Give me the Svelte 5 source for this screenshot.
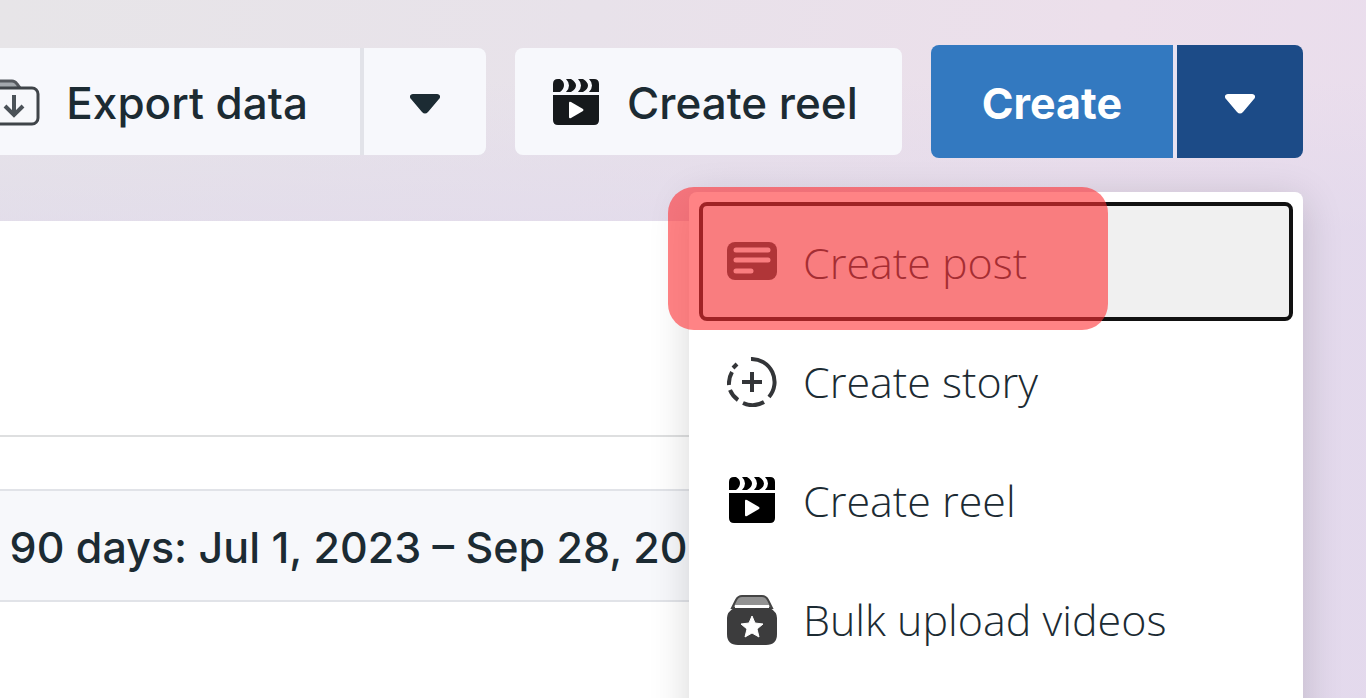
<script>
  const menuItems = [
    { icon: "post", label: "Create post" },
    { icon: "story", label: "Create story" },
    { icon: "reel", label: "Create reel" },
    { icon: "bulk", label: "Bulk upload videos" },
  ];

  let menuOpen = $state(true);
  let active = $state("post");
</script>

{#snippet caret()}
  <svg class="caret" viewBox="0 0 30 20" aria-hidden="true">
    <path
      d="M3 0h24c3 0 4 3 2 5L18 18q-3 3-6 0L1 5C-1 3 0 0 3 0z"
      fill="currentColor"
    />
  </svg>
{/snippet}

{#snippet reel()}
  <svg class="icon" viewBox="0 0 50 50" aria-hidden="true">
    <path
      d="M2 17h46v25q0 5-5 5H7q-5 0-5-5zM7 1h2q4 2 4 6t-4 7H2V6q0-5 5-5zM15 1h5q5 3 5 6.500t-5 6.500h-5q3-3 3-6.500t-3-6.500zM27 1h5q5 3 5 6.500t-5 6.500h-5q3-3 3-6.500t-3-6.500zM38 1h5q5 0 5 5v8H38q3-3 3-6.500t-3-6.500z"
      fill="currentColor"
    />
    <path d="M18 25q0-2 2-1l12 7q1 1 0 2l-12 7q-2 1-2-1z" fill="#fff" />
  </svg>
{/snippet}

<div class="page">
  <header class="toolbar">
    <div class="split">
      <button class="btn light export">
        <svg class="icon" viewBox="0 0 50 50" aria-hidden="true">
          <path
            d="M2 12V8q0-5 5-5h15q3 0 5 3l3 4z"
            fill="#a3a8ad"
            stroke="#55595e"
            stroke-width="3"
          />
          <rect
            x="2"
            y="10"
            width="46"
            height="36"
            rx="6"
            fill="#f7f8fb"
            stroke="#3f4449"
            stroke-width="3"
          />
          <path
            d="M24 17v19M15 28l9 9 9-9"
            fill="none"
            stroke="#4b5258"
            stroke-width="4"
          />
        </svg>
        Export data
      </button>
      <button class="btn light arrow" aria-label="Export options">
        {@render caret()}
      </button>
    </div>

    <button class="btn light single">
      {@render reel()}
      Create reel
    </button>

    <div class="split primary">
      <button class="btn blue">Create</button>
      <button
        class="btn navy arrow"
        aria-label="Create options"
        aria-expanded={menuOpen}
        onclick={() => (menuOpen = !menuOpen)}
      >
        {@render caret()}
      </button>
    </div>
  </header>

  <main class="panel">
    <div class="tabs"></div>
    <div class="filters">
      <button class="range">Last 90 days: Jul 1, 2023 – Sep 28, 2023</button>
    </div>
  </main>

  {#if menuOpen}
    <div class="menu" role="menu">
      {#each menuItems as item (item.icon)}
        <button
          class="item"
          class:active={active === item.icon}
          role="menuitem"
          onclick={() => (active = item.icon)}
        >
          {#if item.icon === "post"}
            <svg class="icon" viewBox="0 0 50 50" aria-hidden="true">
              <rect y="4" width="50" height="38" rx="8" fill="#3a3d40" />
              <path
                d="M9 12h32M9 22h32M9 33h15"
                stroke="#f0f0f0"
                stroke-width="5"
                stroke-linecap="round"
              />
            </svg>
          {:else if item.icon === "story"}
            <svg class="icon" viewBox="0 0 50 50" aria-hidden="true">
              <g fill="none" stroke="#333538" stroke-width="4">
                <path
                  d="M24 2a23 23 0 0 1 18 38M37 45a23 23 0 0 1-21 1M11 43a23 23 0 0 1-8-10M2 28a23 23 0 0 1 3-13M6 11l4-4"
                />
                <path d="M25 15v20M15 25h20" />
              </g>
            </svg>
          {:else if item.icon === "reel"}
            {@render reel()}
          {:else}
            <svg class="icon" viewBox="0 0 50 50" aria-hidden="true">
              <path
                d="M5 13l4-8q2-4 6-4h20q4 0 6 4l4 8z"
                fill="#929292"
                stroke="#444"
                stroke-width="2"
              />
              <path d="M8 10h34v3H8z" fill="#fff" />
              <path
                d="M7 13h36q7 4 7 10v16q0 11-11 11H11Q0 50 0 39V23q0-6 7-10z"
                fill="#3c3c3d"
              />
              <path
                d="M25 21l3 7 8 1-6 5 2 8-7-4-7 4 2-8-6-5 8-1z"
                fill="#fff"
                stroke="#fff"
                stroke-linejoin="round"
              />
            </svg>
          {/if}
          {item.label}
        </button>
      {/each}
    </div>
    <div class="highlight"></div>
  {/if}
</div>

<style>
  :global(body) {
    margin: 0;
  }

  .page {
    position: relative;
    box-sizing: border-box;
    display: flex;
    flex-direction: column;
    height: 100vh;
    padding-right: 63px;
    overflow: hidden;
    background:
      linear-gradient(180deg, transparent 80px, rgba(222, 214, 236, 0.5) 230px),
      linear-gradient(100deg, #e7e5e8 0%, #e8e2ea 40%, #ecdfeb 75%, #e9dded 100%);
    font-family: Inter, "Liberation Sans", sans-serif;
  }

  button {
    flex: none;
    margin: 0;
    border: 0;
    font: inherit;
    white-space: nowrap;
    cursor: pointer;
  }

  .toolbar {
    flex: none;
    display: flex;
    align-items: center;
    justify-content: flex-end;
    gap: 29px;
    height: 113px;
    padding: 45px 0 63px;
  }

  .split {
    flex: none;
    display: flex;
    gap: 4px;
    border-radius: 8px;
    background: #e2e3e9;
    overflow: hidden;
  }

  .split.primary {
    background: #e7e2f1;
  }

  .btn {
    box-sizing: border-box;
    display: flex;
    align-items: center;
    gap: 26px;
    height: 107px;
    padding: 2px 44px 0 36px;
    font-size: 44px;
    font-weight: 500;
  }

  .light {
    background: #f7f8fc;
    color: #1c2b33;
  }

  .export {
    padding-right: 52px;
  }

  .single {
    border-radius: 8px;
  }

  .blue,
  .navy {
    height: 113px;
    color: #fff;
  }

  .blue {
    padding: 2px 51px 0;
    background: #3379c0;
    font-size: 43px;
    font-weight: 700;
  }

  .navy {
    background: #1c4b87;
  }

  .arrow {
    justify-content: center;
    width: 122px;
    padding: 4px 0 0;
  }

  .navy.arrow {
    width: 126px;
  }

  .caret {
    width: 30px;
    height: 20px;
  }

  .icon {
    flex: none;
    width: 50px;
    height: 50px;
  }

  .light .icon {
    color: #16191c;
  }

  .panel {
    flex: 1;
    background: #fff;
  }

  .tabs {
    height: 214px;
    border-bottom: 2px solid #dedfe0;
  }

  .filters {
    display: flex;
    justify-content: flex-end;
    padding-top: 52px;
  }

  .range {
    box-sizing: border-box;
    height: 113px;
    padding: 2px 560px 0 40px;
    border: 2px solid #e1e3e8;
    background: #f7f8fb;
    color: #1c2b33;
    font-size: 43px;
    font-weight: 500;
  }

  .menu {
    position: absolute;
    top: 192px;
    right: 63px;
    bottom: -40px;
    box-sizing: border-box;
    width: 614px;
    padding: 10px;
    border-radius: 8px;
    background: #fff;
    box-shadow: 0 8px 40px rgba(0, 0, 0, 0.16);
  }

  .item {
    box-sizing: border-box;
    display: flex;
    align-items: center;
    gap: 26px;
    width: 100%;
    height: 119px;
    padding: 2px 24px 0;
    border: 4px solid transparent;
    border-radius: 8px;
    background: none;
    color: #1c2b33;
    font-family: "Open Sans", "Noto Sans", sans-serif;
    font-size: 43px;
    font-weight: 300;
  }

  .item .icon {
    color: #000;
  }

  .item.active {
    border-color: #111;
    background: #f0f0f0;
    outline: none;
  }

  .highlight {
    position: absolute;
    top: 187px;
    right: 258px;
    width: 440px;
    height: 143px;
    border-radius: 26px;
    background: rgba(255, 48, 52, 0.6);
    pointer-events: none;
  }
</style>
